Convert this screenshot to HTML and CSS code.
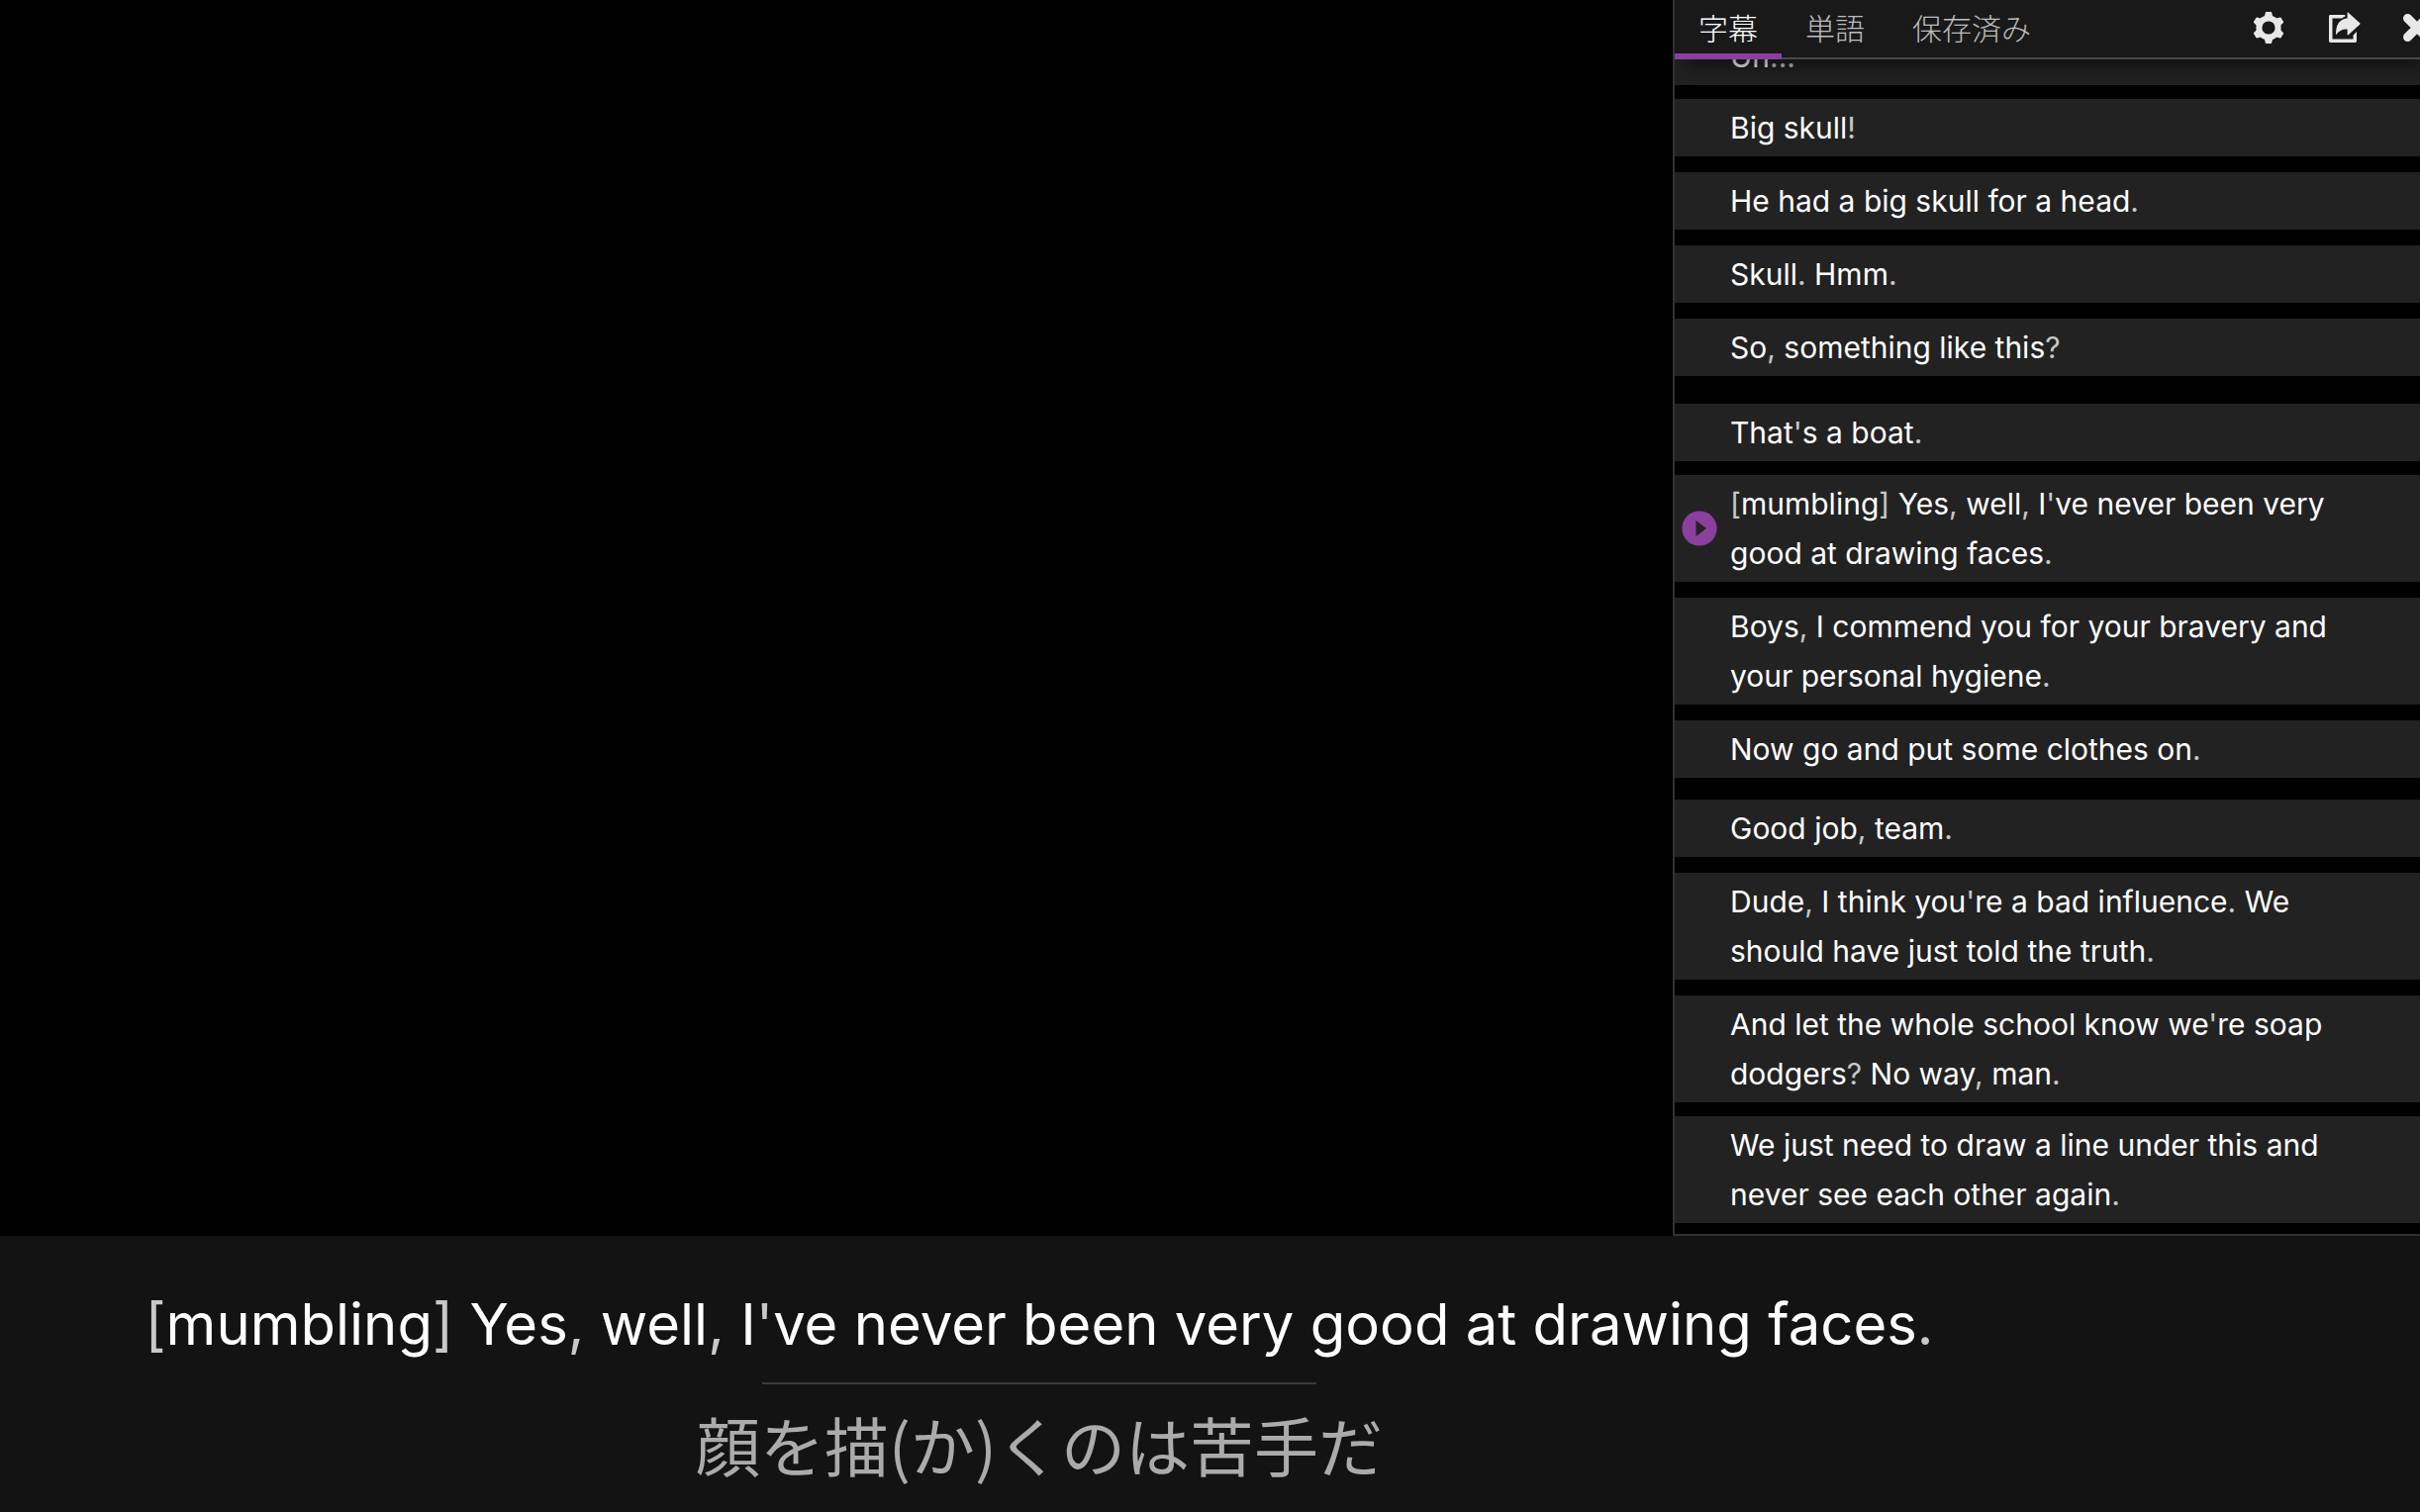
FILE: index.html
```html
<!DOCTYPE html>
<html lang="ja">
<head>
<meta charset="utf-8">
<meta name="viewport" content="width=device-width, initial-scale=1">
<title>字幕</title>
<link rel="stylesheet" href="styles.css">
</head>
<body>
<div class="app">
  <div class="stage">
    <main class="video"></main>
    <aside class="panel">
      <header class="toolbar">
        <nav class="tabs">
          <button type="button" class="tab tab-active">字幕</button>
          <button type="button" class="tab">単語</button>
          <button type="button" class="tab">保存済み</button>
        </nav>
        <div class="actions">
          <button type="button" class="icon-button" aria-label="設定">
            <svg width="32" height="32" viewBox="0 0 32 32" fill="currentColor" aria-hidden="true">
              <circle cx="16" cy="16" r="9.6" fill="none" stroke="currentColor" stroke-width="6"/>
              <path id="tooth" d="M13.6 0h4.800q.7 0 .8.700L20.200 5l2 2.400H9.800L11.800 5l1-4.300q.1-.7.8-.7z"/>
              <use href="#tooth" transform="rotate(60 16 16)"/>
              <use href="#tooth" transform="rotate(120 16 16)"/>
              <use href="#tooth" transform="rotate(180 16 16)"/>
              <use href="#tooth" transform="rotate(240 16 16)"/>
              <use href="#tooth" transform="rotate(300 16 16)"/>
            </svg>
          </button>
          <button type="button" class="icon-button" aria-label="エクスポート">
            <svg width="32" height="32" viewBox="4 4 32 32" fill="currentColor" aria-hidden="true">
              <path d="M21.3 7H6.4Q5 7 5 8.4v25.2Q5 35 6.4 35h25.2q1.400 0 1.400-1.400V24l-3.500 3.600v3.900h-21v-21h9.500q1.300-1.200 3.300-1.800z"/>
              <path d="M23.600 4.800q.5-.4 1 0L36.400 15.600q.6.500 0 1L24.600 27.200q-1 .7-1-.4V21.500q-7-.6-11.600 5.800-.4-15.500 11.600-16.800z"/>
            </svg>
          </button>
          <button type="button" class="icon-button" aria-label="閉じる">
            <svg width="28" height="28" viewBox="0 0 28 28" fill="none" stroke="currentColor" stroke-width="9" stroke-linecap="round" aria-hidden="true">
              <path d="M4.500 4.500l19 19M23.500 4.500l-19 19"/>
            </svg>
          </button>
        </div>
      </header>
      <div class="list-view">
        <ul class="lines">
          <li class="line"><span class="text">Uh<i>...</i></span></li>
          <li class="line tight"><span class="text">Big skull<i>!</i></span></li>
          <li class="line"><span class="text">He had a big skull for a head<i>.</i></span></li>
          <li class="line"><span class="text">Skull<i>.</i> Hmm<i>.</i></span></li>
          <li class="line"><span class="text">So<i>,</i> something like this<i>?</i></span></li>
          <li class="line long-pause"><span class="text">That<i>'</i>s a boat<i>.</i></span></li>
          <li class="line tight">
            <button type="button" class="play" aria-label="再生">
              <svg width="36" height="36" viewBox="0 0 36 36" aria-hidden="true">
                <circle cx="18" cy="18" r="17.600" fill="#8a409c"/>
                <path d="M14.500 10v16l10.500-8z" fill="#222"/>
              </svg>
            </button>
            <span class="text"><i>[</i>mumbling<i>]</i> Yes<i>,</i> well<i>,</i> I<i>'</i>ve never been very good at drawing faces<i>.</i></span>
          </li>
          <li class="line"><span class="text">Boys<i>,</i> I commend you for your bravery and your personal hygiene<i>.</i></span></li>
          <li class="line"><span class="text">Now go and put some clothes on<i>.</i></span></li>
          <li class="line pause"><span class="text">Good job<i>,</i> team<i>.</i></span></li>
          <li class="line"><span class="text">Dude<i>,</i> I think you<i>'</i>re a bad influence<i>.</i> We should have just told the truth<i>.</i></span></li>
          <li class="line"><span class="text">And let the whole school know we<i>'</i>re soap dodgers<i>?</i> No way<i>,</i> man<i>.</i></span></li>
          <li class="line tight"><span class="text">We just need to draw a line under this and never see each other again<i>.</i></span></li>
        </ul>
      </div>
    </aside>
  </div>
  <footer class="subtitle">
    <p class="original" lang="en"><i>[</i>mumbling<i>]</i> Yes<i>,</i> well<i>,</i> I<i>'</i>ve never been very good at drawing faces<i>.</i></p>
    <hr class="divider">
    <p class="translation">顔を描(か)くのは苦手だ</p>
  </footer>
</div>
</body>
</html>
```
FILE: styles.css
```css
* {
  box-sizing: border-box;
}

body {
  margin: 0;
  background: #000;
  color: #fff;
  font-family: Inter, "Noto Sans CJK JP", sans-serif;
}

button {
  margin: 0;
  padding: 0;
  border: 0;
  background: none;
  color: inherit;
  font: inherit;
  cursor: pointer;
}

svg {
  display: block;
  overflow: visible;
}

i {
  font-style: normal;
  color: #c8c8c8;
}

.app {
  display: grid;
  grid-template-rows: minmax(0, 1fr) auto;
  height: 100vh;
  overflow: hidden;
}

.stage {
  display: flex;
  min-height: 0;
}

.video {
  flex: 1;
  background: #000;
}

.panel {
  display: flex;
  flex: none;
  flex-direction: column;
  width: 755px;
  border-left: 2px solid #333;
  border-bottom: 2px solid #333;
  overflow: hidden;
}

.toolbar {
  position: relative;
  z-index: 1;
  display: flex;
  flex: none;
  height: 60px;
  border-bottom: 2px solid #4a4a4a;
  background: #191919;
  box-shadow: 8px 8px 20px rgba(0, 0, 0, 0.5);
}

.tabs {
  display: flex;
  margin-bottom: -2px;
}

.tab {
  padding: 4px 24px 0;
  border-bottom: 6px solid transparent;
  color: #bdbdbd;
  font-size: 30px;
  font-weight: 300;
  line-height: 50px;
}

.tab-active {
  border-bottom-color: #8a409c;
  color: #fff;
}

.actions {
  display: flex;
  align-items: center;
  gap: 44px;
  margin-left: auto;
  margin-right: -11px;
  padding-bottom: 2px;
  color: #e8e8e8;
}

.list-view {
  display: flex;
  flex: 1;
  flex-direction: column;
  justify-content: flex-end;
  min-height: 0;
  padding-bottom: 11px;
}

.lines {
  margin: 0;
  padding: 0;
  list-style: none;
}

.line {
  display: flex;
  align-items: center;
  margin-top: 16px;
  padding: 4px 60px 4px 56px;
  background: #222;
  font-size: 30px;
  line-height: 50px;
}

.tight {
  margin-top: 14px;
}

.pause {
  margin-top: 22px;
}

.long-pause {
  margin-top: 28px;
}

.play {
  margin-left: -49px;
  margin-right: 13px;
}

.subtitle {
  padding: 49px 345px 21px 0;
  background: #131313;
  text-align: center;
}

.original {
  margin: 0;
  font-size: 58px;
  line-height: 80px;
}

.divider {
  width: 560px;
  height: 2px;
  margin: 19px auto 12px;
  border: 0;
  background: #3a3a3a;
}

.translation {
  margin: 0;
  color: #ababab;
  font-family: "Noto Sans CJK JP", sans-serif;
  font-size: 65px;
  line-height: 96px;
}
```
